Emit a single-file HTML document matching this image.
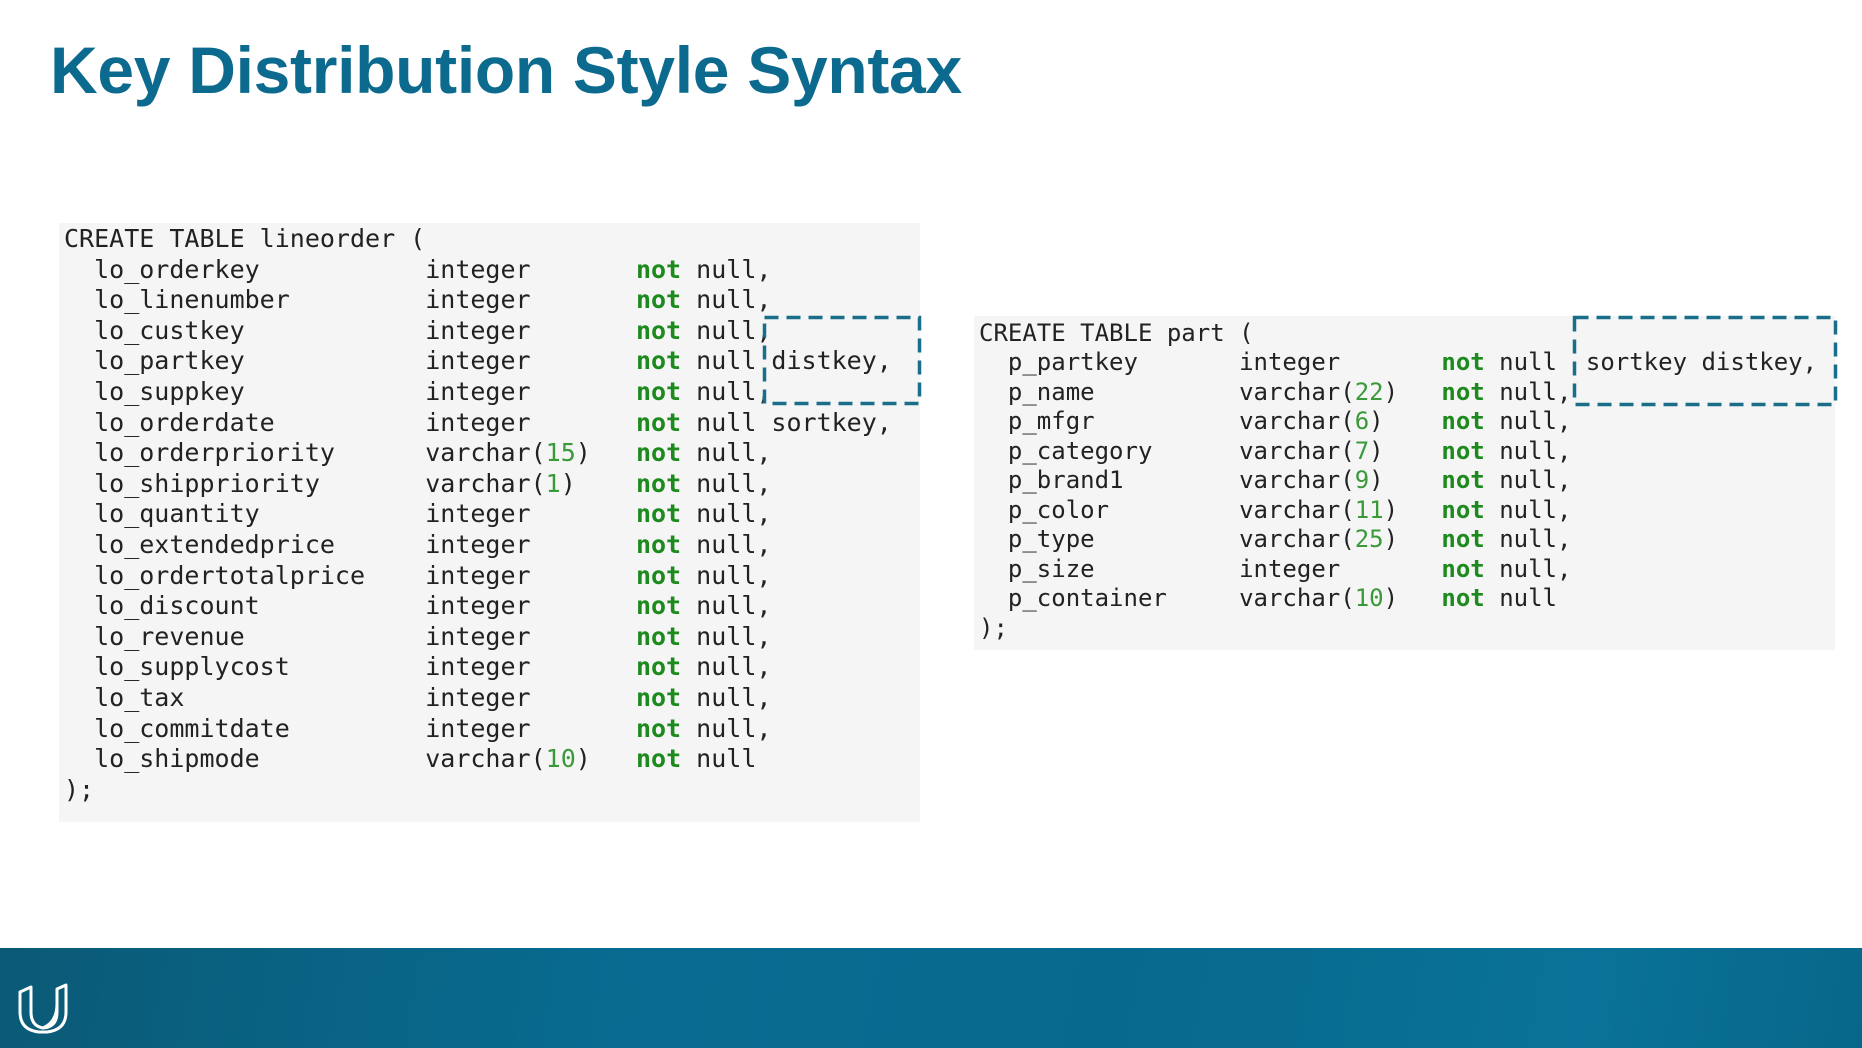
<!DOCTYPE html>
<html><head><meta charset="utf-8"><style>
html,body{margin:0;padding:0;width:1862px;height:1048px;overflow:hidden;background:#fff;position:relative}
.title{position:absolute;left:50px;top:32px;font-family:"Liberation Sans",sans-serif;font-weight:bold;font-size:66px;color:#0c6a8e;letter-spacing:-0.3px;white-space:nowrap}
.box{position:absolute;background:#f5f5f5}
pre{margin:0;font-family:"DejaVu Sans Mono","Liberation Mono",monospace;color:#222;position:absolute}
.k{color:#1d8a1d;font-weight:bold}
.n{color:#3a9a3a}
svg.d{position:absolute;overflow:visible}
.foot{position:absolute;left:0;top:948px;width:1862px;height:100px;background:linear-gradient(100deg,#0a5a76 0%,#086c92 35%,#07698d 60%,#0a7298 85%,#07678a 100%)}
</style></head><body>
<div class="title">Key Distribution Style Syntax</div>

<div class="box" style="left:59px;top:223px;width:861px;height:599px"></div>
<pre style="left:64px;top:224px;font-size:25px;line-height:30.6px">CREATE TABLE lineorder (
  lo_orderkey           integer       <span class="k">not</span> null,
  lo_linenumber         integer       <span class="k">not</span> null,
  lo_custkey            integer       <span class="k">not</span> null,
  lo_partkey            integer       <span class="k">not</span> null distkey,
  lo_suppkey            integer       <span class="k">not</span> null,
  lo_orderdate          integer       <span class="k">not</span> null sortkey,
  lo_orderpriority      varchar(<span class="n">15</span>)   <span class="k">not</span> null,
  lo_shippriority       varchar(<span class="n">1</span>)    <span class="k">not</span> null,
  lo_quantity           integer       <span class="k">not</span> null,
  lo_extendedprice      integer       <span class="k">not</span> null,
  lo_ordertotalprice    integer       <span class="k">not</span> null,
  lo_discount           integer       <span class="k">not</span> null,
  lo_revenue            integer       <span class="k">not</span> null,
  lo_supplycost         integer       <span class="k">not</span> null,
  lo_tax                integer       <span class="k">not</span> null,
  lo_commitdate         integer       <span class="k">not</span> null,
  lo_shipmode           varchar(<span class="n">10</span>)   <span class="k">not</span> null
);</pre>
<svg class="d" style="left:763px;top:316px" width="158" height="89"><rect x="1.5" y="1.5" width="155" height="86" fill="none" stroke="#1a6e8a" stroke-width="3.5" stroke-dasharray="14 8"/></svg>

<div class="box" style="left:974px;top:316px;width:861px;height:334px"></div>
<pre style="left:979px;top:319px;font-size:24px;line-height:29.45px">CREATE TABLE part (
  p_partkey       integer       <span class="k">not</span> null  sortkey distkey,
  p_name          varchar(<span class="n">22</span>)   <span class="k">not</span> null,
  p_mfgr          varchar(<span class="n">6</span>)    <span class="k">not</span> null,
  p_category      varchar(<span class="n">7</span>)    <span class="k">not</span> null,
  p_brand1        varchar(<span class="n">9</span>)    <span class="k">not</span> null,
  p_color         varchar(<span class="n">11</span>)   <span class="k">not</span> null,
  p_type          varchar(<span class="n">25</span>)   <span class="k">not</span> null,
  p_size          integer       <span class="k">not</span> null,
  p_container     varchar(<span class="n">10</span>)   <span class="k">not</span> null
);</pre>
<svg class="d" style="left:1573px;top:316px" width="264" height="90"><rect x="1.5" y="1.5" width="261" height="87" fill="none" stroke="#1a6e8a" stroke-width="3.5" stroke-dasharray="14 8"/></svg>

<div class="foot">
<svg style="position:absolute;left:17px;top:34px" width="52" height="52" viewBox="0 0 52 52">
<path d="M3 10 L14 5 L14 30 Q14 44 26 46 Q40 45 40 30 L40 7 L49 3 L49 30 Q49 48 30 50 L22 50 Q3 48 3 30 Z" fill="none" stroke="#fff" stroke-width="3" stroke-linejoin="round"/>
<path d="M26 46 Q40 40 40 22" fill="none" stroke="#fff" stroke-width="3"/>
</svg>
</div>
</body></html>
